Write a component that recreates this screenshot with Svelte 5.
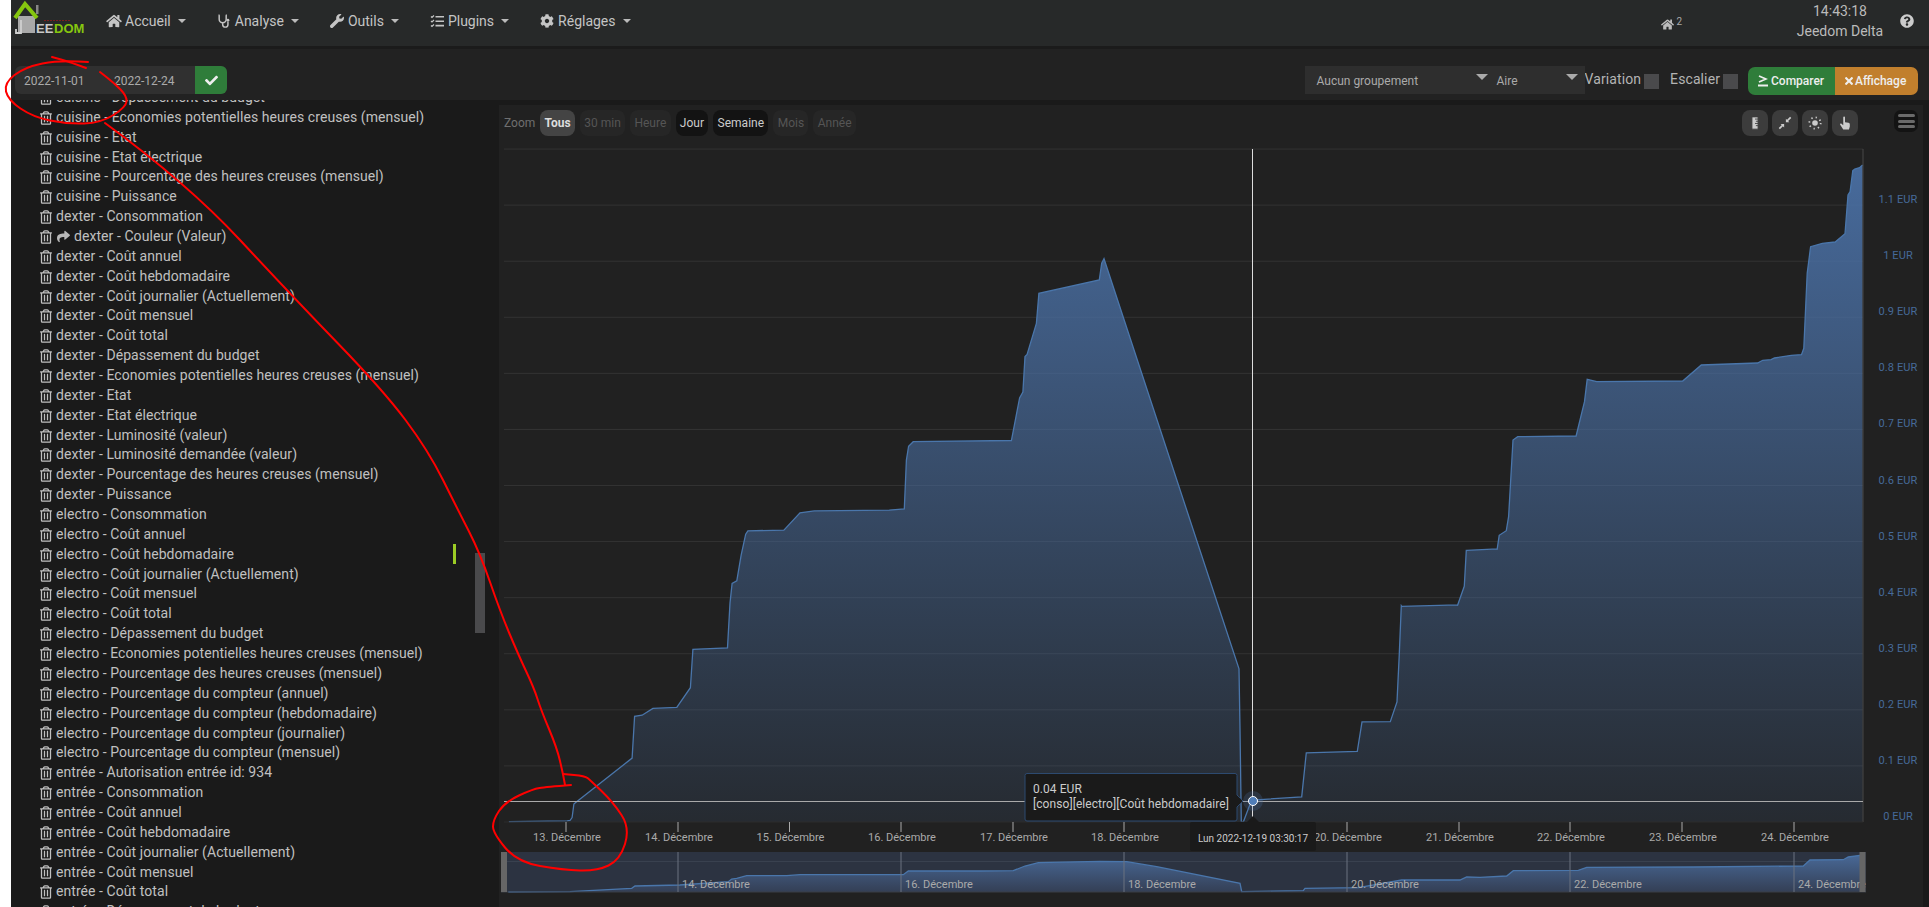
<script>
  const ICON = {
    home: "M280.37 148.26L96 300.11V464a16 16 0 0 0 16 16l112.06-.29a16 16 0 0 0 15.92-16V368a16 16 0 0 1 16-16h64a16 16 0 0 1 16 16v95.64a16 16 0 0 0 16 16.05L464 480a16 16 0 0 0 16-16V300L295.67 148.26a12.19 12.19 0 0 0-15.3 0zM571.6 251.47L488 182.56V44.05a12 12 0 0 0-12-12h-56a12 12 0 0 0-12 12v72.61L318.47 43a48 48 0 0 0-61 0L4.34 251.47a12 12 0 0 0-1.6 16.9l25.5 31A12 12 0 0 0 45.15 301l235.22-193.74a12.19 12.19 0 0 1 15.3 0L530.9 301a12 12 0 0 0 16.9-1.6l25.5-31a12 12 0 0 0-1.7-16.93z",
    wrench: "M507.73 109.1c-2.24-9.03-13.54-12.09-20.12-5.51l-74.36 74.36-67.88-11.31-11.31-67.88 74.36-74.36c6.62-6.62 3.43-17.9-5.66-20.16-47.38-11.74-99.55.91-136.58 37.93-39.64 39.64-50.55 97.1-34.05 147.2L18.74 402.76c-24.99 24.99-24.99 65.51 0 90.5 24.99 24.99 65.51 24.99 90.5 0l213.21-213.21c50.12 16.71 107.47 5.68 147.37-34.22 37.07-37.07 49.7-89.32 37.91-136.73z",
    cog: "M487.4 315.7l-42.6-24.6c4.3-23.2 4.3-47 0-70.2l42.6-24.6c4.9-2.8 7.1-8.6 5.5-14-11.1-35.6-30-67.8-54.7-94.6-3.8-4.1-10-5.1-14.8-2.3L380.8 110c-17.9-15.4-38.5-27.3-60.8-35.1V25.8c0-5.6-3.9-10.5-9.4-11.7-36.7-8.2-74.3-7.8-109.2 0-5.5 1.2-9.4 6.1-9.4 11.7V75c-22.2 7.9-42.8 19.8-60.8 35.1L88.7 85.5c-4.9-2.8-11-1.9-14.8 2.3-24.7 26.7-43.6 58.9-54.7 94.6-1.7 5.4.6 11.2 5.5 14L67.3 221c-4.3 23.2-4.3 47 0 70.2l-42.6 24.6c-4.9 2.8-7.1 8.6-5.5 14 11.1 35.6 30 67.8 54.7 94.6 3.8 4.1 10 5.1 14.8 2.3l42.6-24.6c17.9 15.4 38.5 27.3 60.8 35.1v49.2c0 5.6 3.9 10.5 9.4 11.7 36.7 8.2 74.3 7.8 109.2 0 5.5-1.2 9.4-6.1 9.4-11.7v-49.2c22.2-7.9 42.8-19.8 60.8-35.1l42.6 24.6c4.9 2.8 11 1.9 14.8-2.3 24.7-26.7 43.6-58.9 54.7-94.6 1.5-5.5-.7-11.3-5.6-14.1zM256 336c-44.1 0-80-35.9-80-80s35.9-80 80-80 80 35.9 80 80-35.9 80-80 80z",
    trash: "M268 416h24a12 12 0 0 0 12-12V188a12 12 0 0 0-12-12h-24a12 12 0 0 0-12 12v216a12 12 0 0 0 12 12zM432 80h-82.41l-34-56.7A48 48 0 0 0 274.41 0H173.59a48 48 0 0 0-41.16 23.3L98.41 80H16A16 16 0 0 0 0 96v16a16 16 0 0 0 16 16h16v336a48 48 0 0 0 48 48h288a48 48 0 0 0 48-48V128h16a16 16 0 0 0 16-16V96a16 16 0 0 0-16-16zM171.84 50.91A6 6 0 0 1 177 48h94a6 6 0 0 1 5.15 2.91L293.61 80H154.39zM368 464H80V128h288zm-212-48h24a12 12 0 0 0 12-12V188a12 12 0 0 0-12-12h-24a12 12 0 0 0-12 12v216a12 12 0 0 0 12 12z",
    share: "M503.691 189.836L327.687 37.851C312.281 24.546 288 35.347 288 56.015v80.053C127.371 137.907 0 170.1 0 322.326c0 61.441 39.581 122.309 83.333 154.132 13.653 9.931 33.111-2.533 28.077-18.631C66.066 312.814 132.917 274.316 288 272.085V360c0 20.7 24.3 31.453 39.687 18.164l176.004-152c11.071-9.562 11.086-26.753 0-36.328z",
    check: "M173.898 439.404l-166.4-166.4c-9.997-9.997-9.997-26.206 0-36.204l36.203-36.204c9.997-9.998 26.207-9.998 36.204 0L192 312.69 432.095 72.596c9.997-9.997 26.207-9.997 36.204 0l36.203 36.204c9.997 9.997 9.997 26.206 0 36.204l-294.4 294.401c-9.998 9.997-26.207 9.997-36.204-.001z",
    times: "M242.72 256l100.07-100.07c12.28-12.28 12.28-32.19 0-44.48l-22.24-22.24c-12.28-12.28-32.19-12.28-44.48 0L176 189.28 75.93 89.21c-12.28-12.28-32.19-12.28-44.48 0L9.21 111.45c-12.28 12.28-12.28 32.19 0 44.48L109.28 256 9.21 356.07c-12.28 12.28-12.28 32.19 0 44.48l22.24 22.24c12.28 12.28 32.2 12.28 44.48 0L176 322.72l100.07 100.07c12.28 12.28 32.2 12.28 44.48 0l22.24-22.24c12.28-12.28 12.28-32.19 0-44.48L242.72 256z",
    help: "M504 256c0 136.997-111.043 248-248 248S8 392.997 8 256C8 119.083 119.043 8 256 8s248 111.083 248 248zM262.655 90c-54.497 0-89.255 22.957-116.549 63.758-3.536 5.286-2.353 12.415 2.715 16.258l34.699 26.31c5.205 3.947 12.621 3.008 16.665-2.122 17.864-22.658 30.113-35.797 57.303-35.797 20.429 0 45.698 13.148 45.698 32.958 0 14.976-12.363 22.667-32.534 33.976C247.128 238.528 216 254.941 216 296v4c0 6.627 5.373 12 12 12h56c6.627 0 12-5.373 12-12v-1.333c0-28.462 83.186-29.647 83.186-106.667 0-58.002-60.165-102-116.531-102zM256 338c-25.365 0-46 20.635-46 46 0 25.364 20.635 46 46 46s46-20.636 46-46c0-25.365-20.635-46-46-46z"
  };

  const cost = ["Coût annuel", "Coût hebdomadaire", "Coût journalier (Actuellement)", "Coût mensuel", "Coût total"];
  const eco = "Economies potentielles heures creuses (mensuel)";
  const pct = "Pourcentage des heures creuses (mensuel)";
  const rows = [
    "cuisine - Dépassement du budget", "cuisine - " + eco, "cuisine - Etat", "cuisine - Etat électrique",
    "cuisine - " + pct, "cuisine - Puissance", "dexter - Consommation", "dexter - Couleur (Valeur)",
    ...cost.map((c) => "dexter - " + c),
    "dexter - Dépassement du budget", "dexter - " + eco, "dexter - Etat", "dexter - Etat électrique",
    "dexter - Luminosité (valeur)", "dexter - Luminosité demandée (valeur)", "dexter - " + pct, "dexter - Puissance",
    "electro - Consommation", ...cost.map((c) => "electro - " + c),
    "electro - Dépassement du budget", "electro - " + eco, "electro - " + pct,
    "electro - Pourcentage du compteur (annuel)", "electro - Pourcentage du compteur (hebdomadaire)",
    "electro - Pourcentage du compteur (journalier)", "electro - Pourcentage du compteur (mensuel)",
    "entrée - Autorisation entrée id: 934", "entrée - Consommation", ...cost.map((c) => "entrée - " + c),
    "entrée - Dépassement du budget"
  ];

  const conv = (pts, x0, sx, y0, sy) => pts.map(([x, y]) => [x0 + x / sx, y0 + y / sy]);
  const series = [
    ...conv([[25,1546],[188,1544],[196,1543],[202,1535],[207,1499],[212,1495],[370,1377],[377,1266],[398,1263],[428,1245],[495,1242],[533,1190],[540,1088],[637,1084],[644,965],[650,913],[663,906],[675,838],[688,782],[694,773],[795,771],[840,725],[880,720],[1090,718],[1132,715],[1138,585],[1144,548],[1157,536],[1432,533],[1455,420],[1464,404],[1470,310],[1476,304],[1502,222],[1509,142]], 500, 2.8, 240, 2.658),
    ...conv([[178,106],[185,62],[192,50],[597,1140],[600,1300],[604,1547],[610,1547],[630,1500],[650,1488],[785,1480],[799,1363],[952,1359],[966,1281],[1051,1280],[1071,1228],[1078,1100],[1084,972],[1252,970],[1273,920],[1279,825],[1371,821]], 1040, 3, 240, 2.658),
    ...conv([[5,1399],[170,1397],[190,1340],[198,1231],[288,1227],[294,1186],[315,1172],[322,1130],[335,900],[349,890],[522,888],[547,785],[555,718],[583,725],[838,723],[893,675],[1060,669],[1075,661],[1100,659],[1110,654],[1160,646],[1190,644],[1197,625],[1207,400],[1217,320],[1252,310],[1290,306],[1319,281],[1328,165],[1334,155],[1342,92],[1348,87],[1362,83],[1371,75]], 1400, 2.964, 140, 3)
  ].sort((a, b) => a[0] - b[0]);

  const nav = [
    ...conv([[85,456],[270,455],[455,445],[465,438],[600,435],[745,425],[755,417],[770,415],[800,407],[920,407],[960,404],[1270,404],[1285,393],[1500,393]], 480, 3, 740, 3),
    ...conv([[100,392],[135,378],[175,368],[360,364],[440,365],[530,380],[780,430],[785,455],[970,452],[975,445],[1135,443],[1265,420],[1440,420],[1460,411]], 980, 3, 740, 3),
    ...conv([[0,412],[80,408],[100,392],[295,391],[320,382],[640,381],[970,378],[990,360],[1090,359],[1105,351],[1140,346]], 1480, 3, 740, 3)
  ];

  const line = (p) => p.map(([x, y], i) => (i ? "L" : "M") + x.toFixed(1) + " " + y.toFixed(1)).join("");
  const area = (p, base) => line(p) + `L${p[p.length - 1][0].toFixed(1)} ${base}L${p[0][0].toFixed(1)} ${base}Z`;

  const grid = Array.from({ length: 12 }, (_, i) => 822 - 56.08 * (i + 1));
  const yLabels = ["0 EUR", "0.1 EUR", "0.2 EUR", "0.3 EUR", "0.4 EUR", "0.5 EUR", "0.6 EUR", "0.7 EUR", "0.8 EUR", "0.9 EUR", "1 EUR", "1.1 EUR"];
  const ticks = [[566, 13], [678, 14], [789.5, 15], [901, 16], [1013, 17], [1124, 18], [1347, 20], [1459, 21], [1570, 22], [1682, 23], [1794, 24]];
  const navTicks = [[678, 14], [901, 16], [1124, 18], [1347, 20], [1570, 22], [1794, 24]];

  const menu = ["Accueil", "Analyse", "Outils", "Plugins", "Réglages"];
  const ranges = [["Tous", "on"], ["30 min", "off"], ["Heure", "off"], ["Jour", "dark"], ["Semaine", "dark"], ["Mois", "off"], ["Année", "off"]];

  const smooth = (p) => {
    let d = `M${p[0][0]} ${p[0][1]}`;
    for (let i = 1; i < p.length - 1; i++) {
      const mx = (p[i][0] + p[i + 1][0]) / 2, my = (p[i][1] + p[i + 1][1]) / 2;
      d += `Q${p[i][0]} ${p[i][1]} ${mx} ${my}`;
    }
    const e = p[p.length - 1];
    return d + `L${e[0]} ${e[1]}`;
  };
  const strokes = [
    [[86,68],[70,62],[52,57]],
    [[88,62],[60,60],[25,67],[4,83],[8,100],[33,117],[67,124],[101,123],[126,107],[127,96],[114,83],[100,72]],
    [[105,123],[187,183],[293,297],[383,390],[428,450],[458,510],[480,553],[500,611],[518,654],[534,688],[541,710],[557,748],[563,774],[565,785]],
    [[571,785],[546,787],[533,789],[505,802],[493,820],[493,833],[517,862],[563,870],[597,871],[620,860],[630,828],[613,802],[590,780],[585,776],[563,774]]
  ].map(smooth);
</script>

<div class="root">
  <div class="page">
    <header class="top">
      <div class="logo">
        <svg width="60" height="38" viewBox="0 0 60 38" aria-hidden="true">
          <rect x="7" y="16" width="17" height="17" fill="#a9a9a9" />
          <rect x="25" y="5" width="2.5" height="9" fill="#888" />
          <path d="M4 18 L14 4 L26 18" fill="none" stroke="#86c60f" stroke-width="4" />
          <path d="M10 20 V33 H5 M9 33 H5 V29" fill="none" stroke="#cfcfcf" stroke-width="1.8" />
          <path d="M33 20.5 H60" stroke="#7a1f1f" stroke-width="1.2" stroke-dasharray="2 1" />
        </svg>
        <span class="ee">EE</span><span class="dom">DOM</span>
      </div>
      <nav class="menu">
        {#each menu as m, i}
          <div class="mi">
            {#if i === 0}
              <svg class="mic w16" viewBox="0 0 576 512"><path d={ICON.home} /></svg>
            {:else if i === 1}
              <svg class="mic w14" viewBox="0 0 14 16"><path d="M2 1.5H1.5V6a4 4 0 0 0 8 0V1.5H9M5.5 10v2a3 3 0 0 0 6 0V8.5" fill="none" stroke="currentColor" stroke-width="1.7" /><circle cx="11.5" cy="7" r="1.6" /></svg>
            {:else if i === 2}
              <svg class="mic w14" viewBox="0 0 512 512"><path d={ICON.wrench} /></svg>
            {:else if i === 3}
              <svg class="mic w14" viewBox="0 0 14 14"><path d="M1 2.5l1 1 2-2M1 7l1 1 2-2M1 11.5l1 1 2-2" fill="none" stroke="currentColor" stroke-width="1.2" /><path d="M5.5 2h8.5v1.6H5.5zM5.5 6.4h8.5V8H5.5zM5.5 10.8h8.5v1.6H5.5z" /></svg>
            {:else}
              <svg class="mic w14" viewBox="0 0 512 512"><path d={ICON.cog} /></svg>
            {/if}
            <span>{m}</span>
            <i class="caret"></i>
          </div>
        {/each}
      </nav>
      <div class="status">
        <svg class="house" viewBox="0 0 576 512"><path d={ICON.home} /></svg>
        <sup class="count">2</sup>
        <div class="clock"><span>14:43:18</span><span>Jeedom Delta</span></div>
        <svg class="help" viewBox="0 0 512 512"><path d={ICON.help} /></svg>
      </div>
    </header>

    <section class="tools">
      <div class="dates">
        <span class="date">2022-11-01</span>
        <span class="date">2022-12-24</span>
        <span class="ok"><svg viewBox="0 0 512 512"><path d={ICON.check} /></svg></span>
      </div>
      <div class="opts">
        <div class="sel wide"><span>Aucun groupement</span><i></i></div>
        <div class="sel narrow"><span>Aire</span><i></i></div>
        <span class="lbl">Variation</span><span class="box"></span>
        <span class="lbl second">Escalier</span><span class="box"></span>
        <div class="btns">
          <span class="b green">
            <svg class="ge" viewBox="0 0 10 12"><path d="M1 1l7 3-7 3" fill="none" stroke="currentColor" stroke-width="1.8" /><path d="M0 9.6h10v1.8H0z" /></svg>Comparer
          </span>
          <span class="b orange"><svg class="x" viewBox="0 0 352 512"><path d={ICON.times} /></svg>Affichage</span>
        </div>
      </div>
    </section>

    <main class="body">
      <aside class="side">
        <ul class="rows">
          {#each rows as r}
            <li>
              <svg class="trash" viewBox="0 0 448 512"><path d={ICON.trash} /></svg>
              {#if r.includes("Couleur")}
                <svg class="share" viewBox="0 0 512 512"><path d={ICON.share} /></svg>
              {/if}
              <span>{r}</span>
            </li>
          {/each}
        </ul>
        <i class="mark"></i>
        <i class="thumb"></i>
      </aside>

      <section class="panel">
        <div class="chartbar">
          <div class="ranges">
            <span class="zoomlbl">Zoom</span>
            {#each ranges as [t, k]}
              <span class="rg {k}">{t}</span>
            {/each}
          </div>
          <div class="acts">
            <span class="act"><svg viewBox="0 0 12 16"><path d="M2.5 1h7v14h-7zM6 3.5h3.5M7 6h2.500M6 8.500h3.500M7 11h2.500" fill="#ccc" stroke="#3c3c3c" stroke-width="1" /></svg></span>
            <span class="act"><svg viewBox="0 0 16 16"><path d="M14.500 1.500L10 6M6 10l-4.500 4.500" stroke="#ccc" stroke-width="2" /><path d="M9 3v4h4zM3 9h4v4z" fill="#ccc" /></svg></span>
            <span class="act"><svg viewBox="0 0 16 16"><circle cx="8" cy="8" r="3.200" fill="#ccc" /><circle cx="8" cy="8" r="6.500" fill="none" stroke="#ccc" stroke-width="2" stroke-dasharray="1.500 3.600" /></svg></span>
            <span class="act"><svg viewBox="0 0 14 16"><path d="M5 1.500a1 1 0 0 1 2 0V7l4 .8c1 .2 1.500 1 1.500 2V12l-1 3.500H5L1.500 10c-.6-1 .6-2 1.500-1.200L5 10.500z" fill="#ccc" /></svg></span>
            <span class="burger"><i></i><i></i><i></i></span>
          </div>
        </div>

        <svg class="chart" width="1424" height="767" viewBox="499 140 1424 767">
          <defs>
            <linearGradient id="fillMain" gradientUnits="userSpaceOnUse" x1="0" y1="149" x2="0" y2="822">
              <stop offset="0" stop-color="#4a70a5" stop-opacity="0.95" />
              <stop offset="1" stop-color="#4a70a5" stop-opacity="0.12" />
            </linearGradient>
            <linearGradient id="fillNav" gradientUnits="userSpaceOnUse" x1="0" y1="852" x2="0" y2="892">
              <stop offset="0" stop-color="#4a6c9c" />
              <stop offset="1" stop-color="#343f55" />
            </linearGradient>
          </defs>

          {#each grid as y}
            <line x1="504" x2="1863" y1={y} y2={y} class="gridl" />
          {/each}
          <path d={area(series, 822)} fill="url(#fillMain)" />
          <path d={line(series)} class="ln" />
          <line x1="1863" x2="1863" y1="149" y2="822" stroke="#484848" />
          <line x1="504" x2="1863" y1="822" y2="822" stroke="#2c2c2c" />

          {#each yLabels as t, i}
            <text class="yl" x="1898" y={820 - 56.08 * i}>{t}</text>
          {/each}

          {#each ticks as [x, d]}
            <line x1={x} x2={x} y1="822" y2="832" stroke="#aaa" />
            <text class="xl" x={x + 1} y="841">{d}. Décembre</text>
          {/each}

          <line x1="504" x2="1863" y1="801.500" y2="801.500" stroke="#aaa" stroke-width="1" />
          <line x1="1252.500" x2="1252.500" y1="149" y2="822" stroke="#ddd" stroke-width="1" />
          <circle cx="1253" cy="801" r="10" fill="#4a70a5" fill-opacity="0.25" />
          <circle cx="1253" cy="801" r="4.500" fill="#4f7db8" stroke="#fff" stroke-width="1" />

          <path d="M1027 773.500H1235a2 2 0 0 1 2 2V795L1243 801L1237 807V819a2 2 0 0 1-2 2H1027a2 2 0 0 1-2-2V775.500a2 2 0 0 1 2-2z" fill="#1a1a1a" stroke="#2d4a70" />
          <text class="tt" x="1033" y="792.500">0.04 EUR</text>
          <text class="tt" x="1033" y="807.500">[conso][electro][Coût hebdomadaire]</text>

          <path d="M1192 822H1247L1253 816L1259 822H1314a2 2 0 0 1 2 2V849a2 2 0 0 1-2 2H1192a2 2 0 0 1-2-2V824a2 2 0 0 1 2-2z" fill="#1a1a1a" />
          <text class="dt" x="1253" y="842">Lun 2022-12-19 03:30:17</text>

          <rect x="501" y="852" width="1365" height="40" fill="#2c3341" />
          <line x1="504" x2="1860" y1="861.500" y2="861.500" stroke="#39414f" />
          <path d={area(nav, 892)} fill="url(#fillNav)" />
          <path d={line(nav)} class="ln" />
          <line x1="501" x2="1866" y1="892" y2="892" stroke="#3b3f47" />
          {#each navTicks as [x, d]}
            <line x1={x} x2={x} y1="852" y2="892" stroke="#6b7380" />
            <text class="nl" x={x + 4} y="888">{d}. Décembre</text>
          {/each}
          <rect x="501" y="852" width="6" height="40" fill="#666" />
          <rect x="1859.500" y="852" width="6" height="40" fill="#666" />
        </svg>
      </section>
    </main>
  </div>

  <svg class="ink" width="1929" height="907" viewBox="0 0 1929 907" aria-hidden="true">
    {#each strokes as d}
      <path {d} />
    {/each}
  </svg>
</div>

<style>
  :global(body) { margin: 0; background: #fff; }
  .root { position: relative; width: 1929px; height: 907px; overflow: hidden; font-family: Roboto, "Liberation Sans", sans-serif; }
  .page { margin-left: 11px; height: 907px; background: #1a1a1a; display: flex; flex-direction: column; color: #bbb; }

  .top { height: 49px; box-sizing: border-box; flex: none; background: #272929; display: flex; align-items: center; font-size: 14px; padding-bottom: 4px; border-bottom: 3px solid #1b1b1b; }
  .logo { width: 95px; height: 42px; flex: none; position: relative; }
  .logo svg { position: absolute; left: 0; top: 0; }
  .logo span { position: absolute; top: 22px; font: bold 13px/13px "Liberation Sans", sans-serif; }
  .ee { left: 25px; color: #c9c9c9; }
  .dom { left: 43px; color: #86c60f; }
  .menu { display: flex; gap: 31px; }
  .mi { display: flex; align-items: center; color: #c4c4c4; }
  .mic { fill: currentColor; height: 14px; margin-right: 4px; flex: none; }
  .w16 { width: 16px; margin-right: 3px; }
  .w14 { width: 14px; }
  .caret { width: 0; height: 0; margin-left: 7px; border-left: 4px solid transparent; border-right: 4px solid transparent; border-top: 4px solid #bbb; }
  .status { margin-left: auto; display: flex; align-items: center; }
  .house { width: 13px; height: 13px; fill: #bbb; margin-top: 6px; }
  .count { font-size: 10px; margin: 2px 0 0 2px; line-height: 10px; color: #aaa; }
  .clock { width: 90px; margin-left: 113px; display: flex; flex-direction: column; align-items: center; line-height: 20px; font-size: 14px; white-space: nowrap; }
  .help { width: 14px; height: 14px; fill: #ccc; margin: 0 15px 0 15px; }

  .tools { height: 51px; flex: none; background: #222; display: flex; justify-content: space-between; align-items: flex-start; padding: 17px 11px 0 4px; box-sizing: border-box; }
  .dates { display: flex; height: 28px; width: 212px; background: #303030; border-radius: 6px; overflow: hidden; font-size: 12px; color: #aaa; }
  .date { width: 90px; line-height: 30px; padding-left: 9px; box-sizing: border-box; }
  .ok { flex: none; width: 32px; margin-left: auto; background: #2f7d3a; display: flex; align-items: center; justify-content: center; }
  .ok svg { width: 13px; height: 13px; fill: #eee; }
  .opts { display: flex; align-items: flex-start; }
  .sel { height: 28px; background: #2e2e2e; font-size: 12px; line-height: 31px; color: #aaa; position: relative; box-sizing: border-box; }
  .sel i { position: absolute; top: 8px; width: 0; height: 0; border-left: 6px solid transparent; border-right: 6px solid transparent; border-top: 6px solid #aaa; }
  .wide { width: 192px; padding-left: 12px; }
  .wide i { right: 9px; }
  .narrow { width: 88px; }
  .narrow i { right: 7px; }
  .lbl { font-size: 14px; line-height: 27px; margin-right: 3px; color: #b4b4b4; letter-spacing: .1px; }
  .second { margin-left: 11px; }
  .box { width: 15px; height: 15px; margin-top: 8px; background: #4a4a4c; }
  .btns { display: flex; margin-left: 10px; margin-top: 1px; height: 28px; border-radius: 7px; overflow: hidden; font-size: 12px; font-weight: 500; color: #eee; }
  .b { display: flex; align-items: center; padding-left: 10px; box-sizing: border-box; }
  .green { width: 87px; background: #2f7d3a; }
  .orange { width: 83px; background: #c17f2d; }
  .ge { width: 10px; height: 12px; fill: currentColor; margin-right: 3px; }
  .x { width: 8px; height: 12px; fill: currentColor; margin-right: 2px; }

  .body { flex: 1; min-height: 0; display: flex; }
  .side { width: 488px; flex: none; position: relative; overflow: hidden; }
  .rows { list-style: none; margin: -12px 0 0; padding: 0 0 0 29px; font-size: 14px; line-height: 19.87px; color: #c0c0c0; letter-spacing: .065px; }
  .rows li { display: flex; align-items: center; height: 19.87px; white-space: nowrap; }
  .trash { width: 12px; height: 14px; fill: #c0c0c0; margin-right: 4px; flex: none; }
  .share { width: 15px; height: 13px; fill: #b8b8b8; margin-right: 3px; flex: none; }
  .mark { position: absolute; left: 442px; top: 444px; width: 3px; height: 20px; background: #9ccc25; }
  .thumb { position: absolute; left: 464px; top: 453px; width: 10px; height: 80px; background: #4a4a4c; }

  .panel { width: 1424px; flex: none; margin-top: 5px; background: #212121; }
  .chartbar { display: flex; justify-content: space-between; padding: 5px 5px 0 5px; height: 26px; margin-bottom: 4px; font-size: 12px; }
  .ranges { display: flex; gap: 5px; align-items: center; }
  .zoomlbl { color: #6f6f6f; margin-right: 0; }
  .rg { height: 26px; line-height: 26px; padding: 0 4.3px; border-radius: 8px; }
  .on { background: #444; color: #ddd; font-weight: 700; }
  .off { background: #262626; color: #555; }
  .dark { background: #131313; color: #ccc; }
  .acts { display: flex; gap: 4px; align-items: flex-start; }
  .act { width: 26px; height: 26px; border-radius: 8px; background: #3c3c3c; display: flex; align-items: center; justify-content: center; }
  .act svg { width: 14px; height: 14px; }
  .burger { width: 24px; height: 22px; margin-left: 32px; border-radius: 7px; background: #131313; display: flex; flex-direction: column; gap: 2.500px; align-items: center; justify-content: center; }
  .burger i { width: 17px; height: 3px; border-radius: 2px; background: #6a6a6a; }

  .chart { display: block; }
  .chart text { font-family: Roboto, "Liberation Sans", sans-serif; font-size: 11px; }
  .gridl { stroke: #333; stroke-width: 1; }
  .ln { fill: none; stroke: #4a76ab; stroke-width: 1.300; }
  .chart .yl { fill: #466a99; text-anchor: middle; letter-spacing: .1px; }
  .chart .xl { fill: #aaa; text-anchor: middle; }
  .chart .nl { fill: #aaa; }
  .chart .tt { fill: #ccc; font-size: 12px; letter-spacing: .07px; }
  .chart .dt { fill: #ccc; font-size: 10px; text-anchor: middle; }

  .ink { position: absolute; left: 0; top: 0; pointer-events: none; }
  .ink path { fill: none; stroke: #f00; stroke-width: 2; stroke-linecap: round; stroke-linejoin: round; }
</style>
